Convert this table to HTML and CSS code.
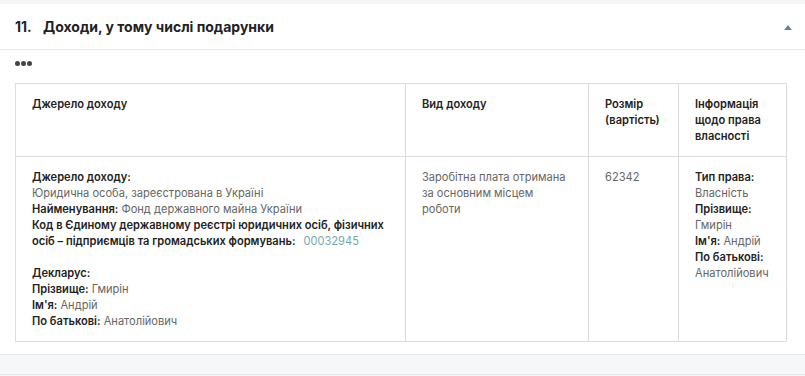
FILE: index.html
```html
<!DOCTYPE html>
<html lang="uk">
<head>
  <meta charset="UTF-8" />
  <title>Доходи</title>
  <link rel="stylesheet" href="styles.css">
</head>
<body>
  <div class="section">
    <div class="section-head">
      <span class="section-num">11.</span>
      <span class="section-title">Доходи, у тому числі подарунки</span>
      <svg class="caret" width="8" height="5" viewBox="0 0 8 5"><path d="M0 5 L4 0 L8 5 Z" fill="#5b8a8c"/></svg>
    </div>

    <div class="section-body">
      <div class="dots"><span></span><span></span><span></span></div>

      <table class="income-table">
        <colgroup>
          <col style="width: 390px">
          <col style="width: 183px">
          <col style="width: 90px">
          <col style="width: 108px">
        </colgroup>
        <thead>
          <tr>
            <th>Джерело доходу</th>
            <th>Вид доходу</th>
            <th>Розмір (вартість)</th>
            <th>Інформація щодо права власності</th>
          </tr>
        </thead>
        <tbody>
          <tr>
            <td>
              <b>Джерело доходу:</b><br>
              Юридична особа, зареєстрована в Україні<br>
              <b>Найменування:</b> Фонд державного майна України<br>
              <b>Код в Єдиному державному реєстрі юридичних осіб, фізичних осіб – підприємців та громадських формувань:</b><span class="code">00032945</span>
              <div class="declarant">
                <b>Декларус:</b><br>
                <b>Прізвище:</b> Гмирін<br>
                <b>Ім'я:</b> Андрій<br>
                <b>По батькові:</b> Анатолійович
              </div>
            </td>
            <td>Заробітна плата отримана за основним місцем роботи</td>
            <td>62342</td>
            <td>
              <b>Тип права:</b><br>
              Власність<br>
              <b>Прізвище:</b><br>
              Гмирін<br>
              <b>Ім'я:</b> Андрій<br>
              <b>По батькові:</b><br>
              Анатолійович
            </td>
          </tr>
        </tbody>
      </table>
    </div>
  </div>

  <div class="next-section"></div>
</body>
</html>
```

FILE: styles.css
```css
* {
  box-sizing: border-box;
}

body {
  margin: 0;
  padding-top: 4px;
  background: #f4f5f7;
  font-family: 'Inter', 'Noto Sans', sans-serif;
  color: #222;
}

.section {
  background: #fff;
}

.section-head {
  height: 46px;
  display: flex;
  align-items: center;
  padding: 0 13px 0 15px;
  border-bottom: 1px solid #e8e9eb;
}

.section-num {
  font-size: 14px;
  font-weight: 700;
  width: 28px;
}

.section-title {
  font-size: 14px;
  font-weight: 700;
  flex: 1;
}

.caret {
  margin-top: 1px;
}

.section-body {
  padding: 11px 15px 12px;
}

.dots {
  display: flex;
  gap: 1px;
  height: 5px;
  margin-bottom: 17px;
}

.dots span {
  width: 5px;
  height: 5px;
  border-radius: 50%;
  background: #444;
}

.income-table {
  width: 771px;
  border-collapse: collapse;
  table-layout: fixed;
  font-size: 11.1px;
  line-height: 16px;
}

.income-table th,
.income-table td {
  border: 1px solid #dcdcdc;
  padding: 12px 16px;
  text-align: left;
  vertical-align: top;
}

.income-table th {
  font-weight: 600;
  color: #222;
}

.income-table td {
  color: #666;
}

.income-table td b {
  font-weight: 600;
  color: #222;
}

.code {
  color: #74a9a9;
  margin-left: 8px;
}

.declarant {
  margin-top: 16px;
}

.next-section {
  height: 21px;
  border-top: 1px solid #e6e8eb;
  border-bottom: 1px solid #e6e8eb;
  background: #f6f7f9;
}
```
